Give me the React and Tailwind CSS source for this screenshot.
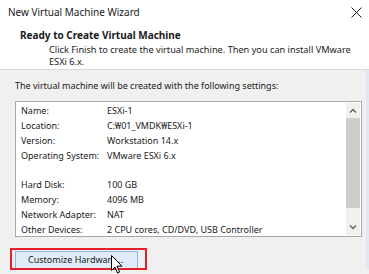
const rows = [
  ['Name:', 'ESXi-1'],
  ['Location:', 'C:\u20A901_VMDK\u20A9ESXi-1'],
  ['Version:', 'Workstation 14.x'],
  ['Operating System:', 'VMware ESXi 6.x'],
  ['', ''],
  ['Hard Disk:', '100 GB'],
  ['Memory:', '4096 MB'],
  ['Network Adapter:', 'NAT'],
  ['Other Devices:', '2 CPU cores, CD/DVD, USB Controller'],
];

function Chevron({ up }) {
  return (
    <svg width="8" height="5" viewBox="0 0 8 5">
      <path d={up ? 'M1 4.5 L4 1.5 L7 4.5' : 'M1 0.5 L4 3.5 L7 0.5'} fill="none" stroke="#606060" strokeWidth="1.3" />
    </svg>
  );
}

export default function App() {
  return (
    <div className="relative w-[369px] h-[274px] overflow-hidden bg-[#f0f0f0] text-[9px] text-[#1a1a1a] whitespace-nowrap"
         style={{ fontFamily: '"Noto Sans", "Noto Sans CJK KR", sans-serif' }}>
      {/* Header */}
      <div className="h-[70px] bg-white border-b border-[#d8d8d8]">
        <div className="flex items-center justify-between h-[24px] pl-2 pr-[7px]">
          <span className="leading-[16px] text-[10px]">New Virtual Machine Wizard</span>
          <svg width="11" height="11" viewBox="0 0 11 11">
            <path d="M0.5 0.5 L10.5 10.5 M10.5 0.5 L0.5 10.5" stroke="#222" strokeWidth="1" />
          </svg>
        </div>
        <div className="mt-[4px] pl-[20px] font-bold text-[10px] leading-[15px]">Ready to Create Virtual Machine</div>
        <div className="mt-[1px] pl-[49px] text-[9.2px] leading-[12px]">
          <div>Click Finish to create the virtual machine. Then you can install VMware</div>
          <div>ESXi 6.x.</div>
        </div>
      </div>

      {/* Body */}
      <div className="flex">
        <div className="w-[366px] flex flex-col">
          <div className="pt-[8px] pl-[15px] leading-[15px]">The virtual machine will be created with the following settings:</div>
          <div className="mt-[8px] ml-[15px] w-[347px] h-[136px] bg-white border border-[#a8a8a8] flex p-px">
            <div className="flex-1 overflow-hidden pl-[4px]">
              {rows.map((r, i) => (
                <div key={i} className="flex h-[14.9px] leading-[15px]">
                  <span className="w-[86px] shrink-0">{r[0]}</span>
                  <span>{r[1]}</span>
                </div>
              ))}
            </div>
            <div className="w-[14px] flex flex-col bg-[#f0f0f0]">
              <div className="h-[15px] flex items-center justify-center"><Chevron up /></div>
              <div className="h-[90px] bg-[#cdcdcd]" />
              <div className="flex-1" />
              <div className="h-[15px] flex items-center justify-center"><Chevron /></div>
            </div>
          </div>
          <div className="mt-[14px] ml-[15px] w-[123px] h-[18px] bg-[#dfebf7] border border-[#8db4dc] flex items-center pl-[12px] leading-[16px]">
            Customize Hardware...
          </div>
        </div>
        <div className="flex-1 bg-[#dde9f4]" />
      </div>

      {/* Annotation */}
      <div className="absolute left-[10px] top-[248px] w-[137px] h-[22px] border-2 border-[#e5202a]" />

      {/* Cursor */}
      <svg className="absolute left-[111px] top-[255px]" width="12" height="19" viewBox="0 0 12 19">
        <path d="M0.5 0.5 L0.5 15.5 L4 12 L6.5 18 L8.5 17 L6 11.2 L11 11.2 Z" fill="white" stroke="black" strokeWidth="1" strokeLinejoin="round" />
      </svg>
    </div>
  );
}
